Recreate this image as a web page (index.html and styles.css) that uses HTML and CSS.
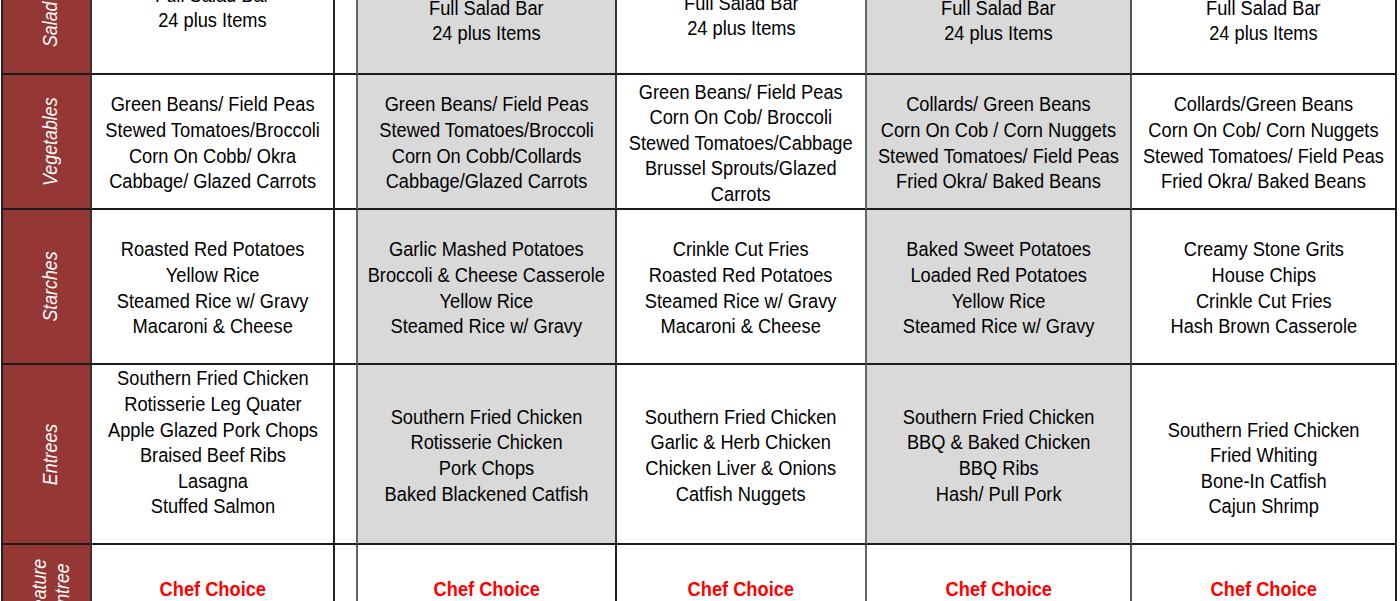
FILE: index.html
```html
<!DOCTYPE html>
<html lang="en">
<head>
<meta charset="utf-8">
<title>Menu</title>
<link rel="stylesheet" href="styles.css">
</head>
<body>
<div class="menu">
  <!-- Salad row -->
  <div class="label"><span class="label-text">Salad Bar</span></div>
  <div class="cell salad s1"><div class="txt"><div>Full Salad Bar</div><div>24 plus Items</div></div></div>
  <div class="cell spacer"></div>
  <div class="cell gray salad s2"><div class="txt"><div>Full Salad Bar</div><div>24 plus Items</div></div></div>
  <div class="cell salad s3"><div class="txt"><div>Full Salad Bar</div><div>24 plus Items</div></div></div>
  <div class="cell gray salad s4"><div class="txt"><div>Full Salad Bar</div><div>24 plus Items</div></div></div>
  <div class="cell salad s5 last"><div class="txt"><div>Full Salad Bar</div><div>24 plus Items</div></div></div>

  <!-- Vegetables -->
  <div class="label"><span class="label-text">Vegetables</span></div>
  <div class="cell"><div class="txt"><div>Green Beans/ Field Peas</div><div>Stewed Tomatoes/Broccoli</div><div>Corn On Cobb/ Okra</div><div>Cabbage/ Glazed Carrots</div></div></div>
  <div class="cell spacer"></div>
  <div class="cell gray"><div class="txt"><div>Green Beans/ Field Peas</div><div>Stewed Tomatoes/Broccoli</div><div>Corn On Cobb/Collards</div><div>Cabbage/Glazed Carrots</div></div></div>
  <div class="cell"><div class="txt"><div>Green Beans/ Field Peas</div><div>Corn On Cob/ Broccoli</div><div>Stewed Tomatoes/Cabbage</div><div>Brussel Sprouts/Glazed</div><div>Carrots</div></div></div>
  <div class="cell gray"><div class="txt"><div>Collards/ Green Beans</div><div>Corn On Cob / Corn Nuggets</div><div>Stewed Tomatoes/ Field Peas</div><div>Fried Okra/ Baked Beans</div></div></div>
  <div class="cell last"><div class="txt"><div>Collards/Green Beans</div><div>Corn On Cob/ Corn Nuggets</div><div>Stewed Tomatoes/ Field Peas</div><div>Fried Okra/ Baked Beans</div></div></div>

  <!-- Starches -->
  <div class="label"><span class="label-text">Starches</span></div>
  <div class="cell"><div class="txt"><div>Roasted Red Potatoes</div><div>Yellow Rice</div><div>Steamed Rice w/ Gravy</div><div>Macaroni &amp; Cheese</div></div></div>
  <div class="cell spacer"></div>
  <div class="cell gray"><div class="txt"><div>Garlic Mashed Potatoes</div><div>Broccoli &amp; Cheese Casserole</div><div>Yellow Rice</div><div>Steamed Rice w/ Gravy</div></div></div>
  <div class="cell"><div class="txt"><div>Crinkle Cut Fries</div><div>Roasted Red Potatoes</div><div>Steamed Rice w/ Gravy</div><div>Macaroni &amp; Cheese</div></div></div>
  <div class="cell gray"><div class="txt"><div>Baked Sweet Potatoes</div><div>Loaded Red Potatoes</div><div>Yellow Rice</div><div>Steamed Rice w/ Gravy</div></div></div>
  <div class="cell last"><div class="txt"><div>Creamy Stone Grits</div><div>House Chips</div><div>Crinkle Cut Fries</div><div>Hash Brown Casserole</div></div></div>

  <!-- Entrees -->
  <div class="label"><span class="label-text">Entrees</span></div>
  <div class="cell"><div class="txt"><div>Southern Fried Chicken</div><div>Rotisserie Leg Quater</div><div>Apple Glazed Pork Chops</div><div>Braised Beef Ribs</div><div>Lasagna</div><div>Stuffed Salmon</div><div class="blank">&nbsp;</div></div></div>
  <div class="cell spacer"></div>
  <div class="cell gray"><div class="txt"><div>Southern Fried Chicken</div><div>Rotisserie Chicken</div><div>Pork Chops</div><div>Baked Blackened Catfish</div></div></div>
  <div class="cell"><div class="txt"><div>Southern Fried Chicken</div><div>Garlic &amp; Herb Chicken</div><div>Chicken Liver &amp; Onions</div><div>Catfish Nuggets</div></div></div>
  <div class="cell gray"><div class="txt"><div>Southern Fried Chicken</div><div>BBQ &amp; Baked Chicken</div><div>BBQ Ribs</div><div>Hash/ Pull Pork</div></div></div>
  <div class="cell last"><div class="txt"><div class="blank">&nbsp;</div><div>Southern Fried Chicken</div><div>Fried Whiting</div><div>Bone-In Catfish</div><div>Cajun Shrimp</div></div></div>

  <!-- Feature Entree -->
  <div class="label"><span class="label-text">Feature<br>Entree</span></div>
  <div class="cell chef"><div class="txt">Chef Choice</div></div>
  <div class="cell spacer"></div>
  <div class="cell chef"><div class="txt">Chef Choice</div></div>
  <div class="cell chef"><div class="txt">Chef Choice</div></div>
  <div class="cell chef"><div class="txt">Chef Choice</div></div>
  <div class="cell chef last"><div class="txt">Chef Choice</div></div>
</div>
</body>
</html>
```

FILE: styles.css
```css
html, body {
  margin: 0;
  padding: 0;
  background: #ffffff;
  overflow: hidden;
}

body {
  font-family: "Liberation Sans", Arial, sans-serif;
  color: #000000;
}

.menu {
  display: grid;
  grid-template-columns: 89px 243px 23px 259px 250px 265px 265px;
  grid-template-rows: 133px 135px 155px 180px 90px;
  margin: -60px 0 0 1px;
  width: max-content;
  border-top: 2px solid #222;
  border-left: 2px solid #222;
}

.label {
  box-sizing: border-box;
  background: #953735;
  border-right: 2px solid #333;
  border-bottom: 2px solid #1c1c1c;
  display: flex;
  align-items: center;
  justify-content: center;
  padding-left: 8px;
}

.label-text {
  writing-mode: vertical-rl;
  transform: rotate(180deg) scaleY(0.89);
  color: #ffffff;
  font-style: italic;
  font-size: 20px;
  line-height: 23px;
  text-align: center;
  white-space: nowrap;
}

.cell {
  box-sizing: border-box;
  border-right: 2px solid #222;
  border-bottom: 2px solid #1c1c1c;
  display: flex;
  flex-direction: column;
  align-items: center;
  justify-content: center;
  padding-top: 2px;
  font-size: 20.5px;
  line-height: 25.6px;
  text-align: center;
  white-space: nowrap;
  background: #ffffff;
}

.txt {
  transform: scaleX(0.89);
  transform-origin: center;
}

.cell.spacer {
  border-right-color: #666;
}

.cell.gray {
  background: #d9d9d9;
  border-right-color: #333;
}

.menu > .cell:nth-child(7n+5) {
  border-right-color: #666;
}

.menu > .cell:nth-child(7n+6) {
  border-right-color: #555;
}

.cell.last {
  border-right-color: #222;
}

.cell.salad {
  justify-content: flex-end;
  padding-top: 0;
}

.s1 { padding-bottom: 40px; }
.s2 { padding-bottom: 27px; }
.s3 { padding-bottom: 32px; }
.s4 { padding-bottom: 27px; }
.s5 { padding-bottom: 27px; }

.cell.chef {
  color: #ff0000;
  font-weight: bold;
  padding-top: 0;
}
```
